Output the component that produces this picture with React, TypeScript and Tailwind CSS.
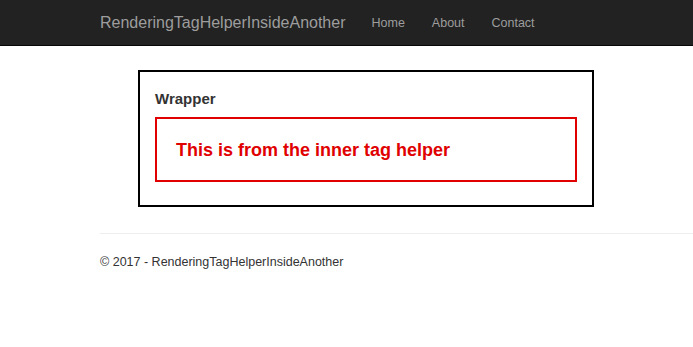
export default function App() {
  return (
    <div className="min-h-[347px] bg-white" style={{ fontFamily: '"Liberation Sans", Arial, sans-serif' }}>
      <nav className="h-[46px] bg-[#222222] border-b border-[#080808] flex items-center pl-[100px] pt-[1px]">
        <span className="text-[16px] text-[#9d9d9d] leading-none mr-[26px]">RenderingTagHelperInsideAnother</span>
        <span className="text-[12.5px] text-[#9d9d9d] mr-[27px]">Home</span>
        <span className="text-[12.5px] text-[#9d9d9d] mr-[27px]">About</span>
        <span className="text-[12.5px] text-[#9d9d9d]">Contact</span>
      </nav>
      <div className="pt-[24px] pl-[138px]">
        <div className="w-[456px] h-[137px] border-2 border-black pl-[15px] pt-[18px]">
          <div className="text-[15px] font-bold text-[#333333] leading-[18px]">Wrapper</div>
          <div className="mt-[9px] w-[422px] h-[65px] border-2 border-[#e00000] pl-[19px] flex items-center">
            <span className="text-[18px] font-bold text-[#e00000] leading-none">This is from the inner tag helper</span>
          </div>
        </div>
      </div>
      <div className="ml-[100px] mt-[26px] border-t border-[#eeeeee]" />
      <div className="pl-[100px] pt-[18px] text-[12.5px] text-[#333333] leading-[20px]">© 2017 - RenderingTagHelperInsideAnother</div>
    </div>
  );
}
